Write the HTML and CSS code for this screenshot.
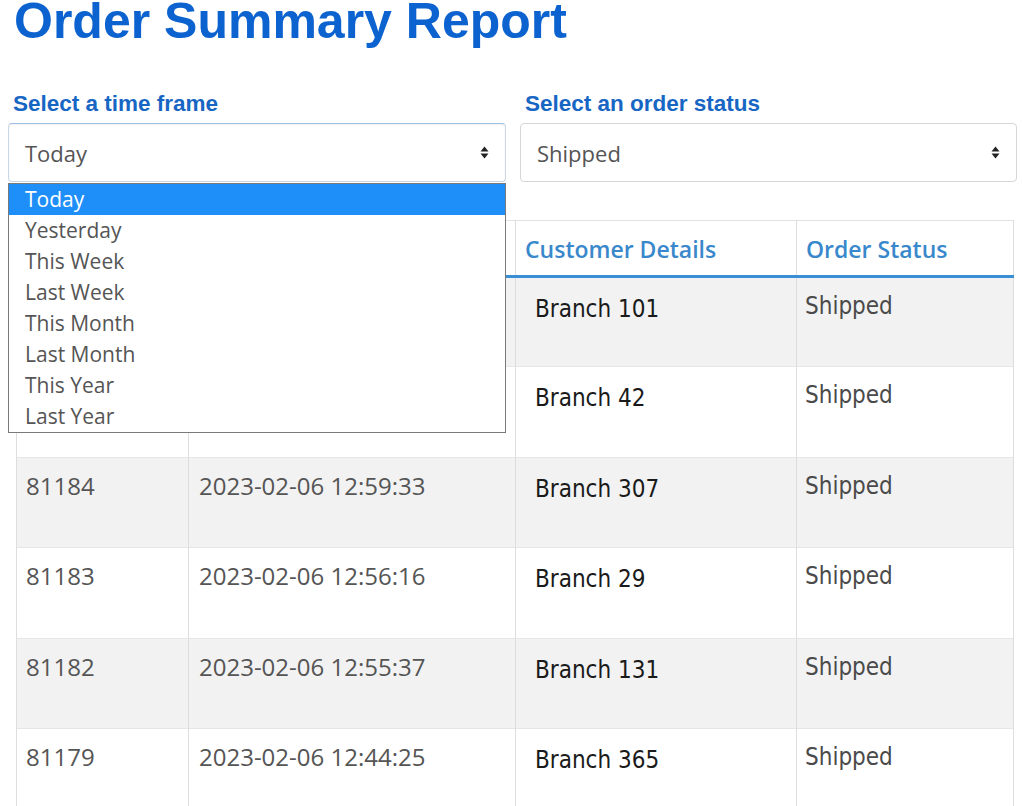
FILE: index.html
```html
<!DOCTYPE html>
<html lang="en">
<head>
  <meta charset="UTF-8">
  <meta name="viewport" content="width=device-width, initial-scale=1.0">
  <title>Order Summary Report</title>
  <link rel="stylesheet" href="styles.css">
</head>
<body>
  <h1 class="title">Order Summary Report</h1>

  <div class="filters">
    <div class="filter">
      <label class="filter-label">Select a time frame</label>
      <div class="select-box focused">
        <span>Today</span>
        <svg class="arrows" width="9" height="13" viewBox="0 0 9 13"><path d="M0.5 5.5 L4.5 0.5 L8.5 5.5 Z M0.5 7.5 L8.5 7.5 L4.5 12.5 Z" fill="#222"/></svg>
      </div>
      <ul class="options">
        <li class="selected">Today</li>
        <li>Yesterday</li>
        <li>This Week</li>
        <li>Last Week</li>
        <li>This Month</li>
        <li>Last Month</li>
        <li>This Year</li>
        <li>Last Year</li>
      </ul>
    </div>
    <div class="filter">
      <label class="filter-label">Select an order status</label>
      <div class="select-box">
        <span>Shipped</span>
        <svg class="arrows" width="9" height="13" viewBox="0 0 9 13"><path d="M0.5 5.5 L4.5 0.5 L8.5 5.5 Z M0.5 7.5 L8.5 7.5 L4.5 12.5 Z" fill="#222"/></svg>
      </div>
    </div>
  </div>

  <!-- first two columns sit under the open dropdown, so their top cells stay blank -->
  <table class="orders">
    <colgroup>
      <col class="c-id">
      <col class="c-date">
      <col class="c-cust">
      <col class="c-status">
    </colgroup>
    <thead>
      <tr>
        <th></th>
        <th></th>
        <th>Customer Details</th>
        <th>Order Status</th>
      </tr>
    </thead>
    <tbody>
      <tr>
        <td></td>
        <td></td>
        <td class="cust">Branch 101</td>
        <td class="status">Shipped</td>
      </tr>
      <tr>
        <td></td>
        <td></td>
        <td class="cust">Branch 42</td>
        <td class="status">Shipped</td>
      </tr>
      <tr>
        <td>81184</td>
        <td>2023-02-06 12:59:33</td>
        <td class="cust">Branch 307</td>
        <td class="status">Shipped</td>
      </tr>
      <tr>
        <td>81183</td>
        <td>2023-02-06 12:56:16</td>
        <td class="cust">Branch 29</td>
        <td class="status">Shipped</td>
      </tr>
      <tr>
        <td>81182</td>
        <td>2023-02-06 12:55:37</td>
        <td class="cust">Branch 131</td>
        <td class="status">Shipped</td>
      </tr>
      <tr>
        <td>81179</td>
        <td>2023-02-06 12:44:25</td>
        <td class="cust">Branch 365</td>
        <td class="status">Shipped</td>
      </tr>
    </tbody>
  </table>
</body>
</html>
```

FILE: styles.css
```css
body {
  margin: 0;
  background: #fff;
  font-family: "Open Sans", sans-serif;
  color: #555;
  overflow: hidden;
}
.title {
  margin: -4px 0 0 14px;
  font-family: "Liberation Sans", Arial, sans-serif;
  font-size: 50px;
  line-height: 50px;
  font-weight: bold;
  color: #0c63cf;
}
.filters {
  display: grid;
  grid-template-columns: 498px 497px;
  gap: 14px;
  margin: 45px 0 0 8px;
}
.filter {
  position: relative;
}
.filter-label {
  display: block;
  padding-left: 5px;
  font-family: "Liberation Sans", Arial, sans-serif;
  font-size: 22.5px;
  font-weight: bold;
  line-height: 26px;
  color: #1766c4;
}
.select-box {
  margin-top: 6px;
  height: 57px;
  border: 1px solid #d6d6d6;
  border-radius: 4px;
  display: flex;
  align-items: center;
  justify-content: space-between;
  padding: 0 16px;
  font-size: 22px;
  color: #555;
  background: #fff;
}
.select-box.focused {
  border-color: #c9d6e3;
  border-top-color: #9dbfe2;
  box-shadow: inset 0 1px 2px rgba(0,0,0,0.06);
}
.arrows {
  display: block;
}
.options {
  position: absolute;
  top: calc(100% + 1px);
  left: 0;
  width: 498px;
  box-sizing: border-box;
  margin: 0;
  padding: 0;
  list-style: none;
  background: #fff;
  border: 1px solid #7a7a7a;
  z-index: 10;
}
.options li {
  height: 31px;
  line-height: 31px;
  padding-left: 16px;
  font-size: 21px;
  color: #555;
}
.options li.selected {
  background: #1e8ff8;
  color: #fff;
}
.orders {
  margin: 38px 0 0 16px;
  width: 997px;
  table-layout: fixed;
  border-collapse: collapse;
}
.c-id { width: 172px; }
.c-date { width: 327px; }
.c-cust { width: 281px; }
.c-status { width: 217px; }
.orders th,
.orders td {
  border-left: 1px solid #dedede;
  border-right: 1px solid #dedede;
  vertical-align: top;
  text-align: left;
  white-space: nowrap;
}
.orders thead tr {
  height: 56px;
}
.orders th {
  border-top: 1px solid #e2e2e2;
  border-bottom: 3px solid #3a8fd4;
  padding: 12px 9px 0;
  font-size: 23px;
  font-weight: 600;
  line-height: 1.4;
  color: #3a88cc;
}
.orders tbody tr {
  height: 90.4px;
}
.orders tbody tr:nth-child(odd) {
  background: #f2f2f2;
}
.orders td {
  border-top: 1px solid #e6e6e6;
  padding: 11px 10px 0;
  font-size: 24px;
  line-height: 1.4;
  color: #555;
}
.orders td:first-child {
  padding-left: 9px;
}
.orders td.cust {
  padding: 15px 10px 0 19px;
  font-family: "DejaVu Sans Condensed", "Liberation Sans", sans-serif;
  font-size: 24px;
  color: #1a1a1a;
}
.orders td.status {
  padding: 12px 8px 0;
  font-family: "DejaVu Sans Condensed", "Liberation Sans", sans-serif;
  font-size: 24px;
  color: #4a4a4a;
}
```
